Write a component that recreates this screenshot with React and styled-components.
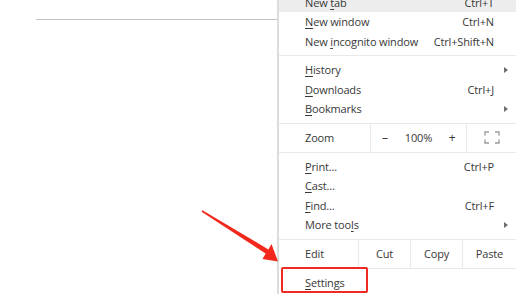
import React from 'react';
import styled, { createGlobalStyle } from 'styled-components';

const GlobalStyle = createGlobalStyle`
  html, body {
    margin: 0;
    background: #ffffff;
    overflow: hidden;
  }
`;

const menuItems = [
  { label: 'New tab', key: 4, shortcut: 'Ctrl+T', active: true },
  { label: 'New window', key: 0, shortcut: 'Ctrl+N' },
  { label: 'New incognito window', key: 4, shortcut: 'Ctrl+Shift+N' },
  'sep',
  { label: 'History', key: 0, submenu: true },
  { label: 'Downloads', key: 0, shortcut: 'Ctrl+J' },
  { label: 'Bookmarks', key: 0, submenu: true },
  'zoom',
  { label: 'Print...', key: 0, shortcut: 'Ctrl+P' },
  { label: 'Cast...', key: 0 },
  { label: 'Find...', key: 0, shortcut: 'Ctrl+F' },
  { label: 'More tools', key: 8, submenu: true },
  'edit',
  { label: 'Settings', key: 0 },
];

const Mnemonic = ({ text, at }) => (
  <Label>
    {text.slice(0, at)}
    <u>{text[at]}</u>
    {text.slice(at + 1)}
  </Label>
);

const FullscreenIcon = () => (
  <svg width="16" height="13" viewBox="0 0 16 13" fill="none" stroke="#9c9c9c" strokeWidth="1.4">
    <path d="M1 4.5V1h4M11 1h4v3.5M15 8.5V12h-4M5 12H1V8.5" />
  </svg>
);

const App = () => {
  return (
    <>
      <GlobalStyle />
      <Page>
        <Canvas>
          <Rule />
        </Canvas>
        <Menu>
          {menuItems.map((item, i) => {
            if (item === 'sep') return <Separator key={i} />;
            if (item === 'zoom')
              return (
                <ControlRow key={i}>
                  <RowLabel>Zoom</RowLabel>
                  <Cell width={95}>
                    <StepButton>–</StepButton>
                    <Percent>100%</Percent>
                    <StepButton>+</StepButton>
                  </Cell>
                  <Cell width={49}>
                    <FullscreenIcon />
                  </Cell>
                </ControlRow>
              );
            if (item === 'edit')
              return (
                <ControlRow key={i}>
                  <RowLabel>Edit</RowLabel>
                  <Cell width={51}>Cut</Cell>
                  <Cell width={51}>Copy</Cell>
                  <Cell width={53}>Paste</Cell>
                </ControlRow>
              );
            return (
              <Item key={i} active={item.active}>
                <Mnemonic text={item.label} at={item.key} />
                {item.shortcut && <Shortcut>{item.shortcut}</Shortcut>}
                {item.submenu && <SubArrow />}
              </Item>
            );
          })}
        </Menu>
        <Pointer width="516" height="294" viewBox="0 0 516 294">
          <polygon
            fill="#f2281d"
            points="202.4,210.3 268.4,249.4 271.5,244 278,261.5 262.5,259 265.6,253.6 201.6,211.7"
          />
        </Pointer>
        <Highlight />
      </Page>
    </>
  );
};

const Page = styled.div`
  position: relative;
  display: flex;
  width: 516px;
  height: 294px;
  overflow: hidden;
  font-family: 'Open Sans', 'Noto Sans', sans-serif;
  font-size: 11px;
  letter-spacing: -0.15px;
  color: #383838;
`;

const Canvas = styled.div`
  width: 277px;
  flex-shrink: 0;
`;

const Rule = styled.div`
  margin: 19px 0 0 36px;
  height: 1px;
  background: #c2c2c2;
`;

const Menu = styled.div`
  width: 237px;
  flex-shrink: 0;
  margin-top: -7.5px;
  border-left: 2px solid #dcdcdc;
  background: #ffffff;
`;

const Item = styled.div`
  display: flex;
  align-items: center;
  height: 19.5px;
  padding: 0 8px 0 26px;
  background: ${(p) => (p.active ? '#ededed' : 'transparent')};
  white-space: nowrap;
`;

const Label = styled.span`
  flex: 1;

  u {
    text-underline-offset: 1.5px;
  }
`;

const Shortcut = styled.span`
  margin-right: 14px;
`;

const SubArrow = styled.span`
  width: 0;
  height: 0;
  border-top: 3.5px solid transparent;
  border-bottom: 3.5px solid transparent;
  border-left: 4px solid #6e6e6e;
`;

const Separator = styled.div`
  height: 1px;
  margin: 4px 0;
  background: #e9e9e9;
`;

const ControlRow = styled.div`
  display: flex;
  height: 30px;
  box-sizing: border-box;
  margin: 4px 0;
  border-top: 1px solid #e9e9e9;
  border-bottom: 1px solid #e9e9e9;
`;

const RowLabel = styled.div`
  flex: 1;
  display: flex;
  align-items: center;
  padding-left: 26px;
`;

const Cell = styled.div`
  width: ${(p) => p.width}px;
  display: flex;
  align-items: center;
  justify-content: center;
  border-left: 1px solid #e9e9e9;
`;

const StepButton = styled.span`
  width: 28px;
  text-align: center;
  font-size: 12px;
`;

const Percent = styled.span`
  flex: 1;
  text-align: center;
`;

const Pointer = styled.svg`
  position: absolute;
  left: 0;
  top: 0;
  pointer-events: none;
`;

const Highlight = styled.div`
  position: absolute;
  left: 281px;
  top: 266.5px;
  width: 86.5px;
  height: 26px;
  box-sizing: border-box;
  border: 2px solid #ee2a22;
  border-radius: 2px;
  pointer-events: none;
`;

export default App;
